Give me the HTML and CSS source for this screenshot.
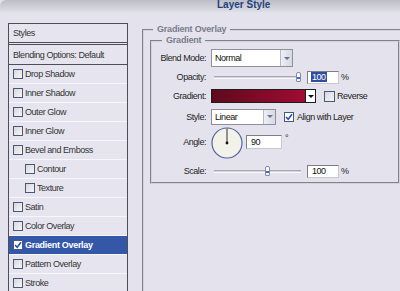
FILE: index.html
```html
<!DOCTYPE html>
<html lang="en">
<head>
    <meta charset="UTF-8">
    <meta name="viewport" content="width=device-width, initial-scale=1.0">
    <title>Layer Style</title>
    <link rel="stylesheet" href="styles.css">
</head>
<body>
    <div class="titlebar"><span class="title">Layer Style</span></div>

    <div class="dialog">
        <ul class="style-list">
            <li class="head styles">Styles</li>
            <li class="head">Blending Options: Default</li>
            <li><span class="box"></span>Drop Shadow</li>
            <li><span class="box"></span>Inner Shadow</li>
            <li><span class="box"></span>Outer Glow</li>
            <li><span class="box"></span>Inner Glow</li>
            <li><span class="box"></span>Bevel and Emboss</li>
            <li class="sub"><span class="box"></span>Contour</li>
            <li class="sub"><span class="box"></span>Texture</li>
            <li><span class="box"></span>Satin</li>
            <li><span class="box"></span>Color Overlay</li>
            <li class="selected"><span class="box checked"><svg width="8" height="8" viewBox="0 0 8 8"><path d="M1 4 L3.2 6.3 L7 1.2" fill="none" stroke="#2452b4" stroke-width="1.6"/></svg></span>Gradient Overlay</li>
            <li><span class="box"></span>Pattern Overlay</li>
            <li><span class="box"></span>Stroke</li>
        </ul>

        <div class="settings">
            <fieldset class="group">
                <legend>Gradient Overlay</legend>
                <fieldset class="group inner">
                    <legend>Gradient</legend>

                    <div class="row row-blend">
                        <span class="label">Blend Mode:</span>
                        <div class="select blend-select"><span class="select-value">Normal</span><span class="select-btn"></span></div>
                    </div>

                    <div class="row row-opacity">
                        <span class="label">Opacity:</span>
                        <div class="slider"><span class="thumb" style="left: 82px"></span></div>
                        <span class="field"><span class="highlight">100</span></span>
                        <span class="unit">%</span>
                    </div>

                    <div class="row row-gradient">
                        <span class="label">Gradient:</span>
                        <span class="swatch"></span><span class="swatch-btn"></span>
                        <span class="box reverse-box"></span><span class="check-label">Reverse</span>
                    </div>

                    <div class="row row-style">
                        <span class="label">Style:</span>
                        <div class="select style-select"><span class="select-value">Linear</span><span class="select-btn"></span></div>
                        <span class="box align-box checked"><svg width="8" height="8" viewBox="0 0 8 8"><path d="M1 4 L3.2 6.3 L7 1.2" fill="none" stroke="#2452b4" stroke-width="1.6"/></svg></span><span class="check-label">Align with Layer</span>
                    </div>

                    <div class="row row-angle">
                        <span class="label">Angle:</span>
                        <svg class="dial" width="32" height="32" viewBox="0 0 32 32">
                            <circle cx="16" cy="16" r="15" fill="#f2f1ea" stroke="#53639b" stroke-width="1.2"/>
                            <line x1="16" y1="16" x2="16" y2="1.5" stroke="#333" stroke-width="1"/>
                            <circle cx="16" cy="16" r="1.4" fill="#111"/>
                        </svg>
                        <span class="field angle-field">90</span>
                        <span class="degree">°</span>
                    </div>

                    <div class="row row-scale">
                        <span class="label">Scale:</span>
                        <div class="slider"><span class="thumb" style="left: 51px"></span></div>
                        <span class="field">100</span>
                        <span class="unit">%</span>
                    </div>
                </fieldset>
            </fieldset>
        </div>
    </div>
</body>
</html>
```

FILE: styles.css
```css
body {
    margin: 0;
    width: 400px;
    height: 291px;
    overflow: hidden;
    background-color: #e4e3ed;
    font-family: 'Liberation Sans', Arial, sans-serif;
    font-size: 9px;
    letter-spacing: -0.45px;
    color: #1e1e1e;
}

.titlebar {
    height: 13px;
    background: linear-gradient(to bottom, #bdbdc7 0, #d3d3dc 65%, #e4e3ed 100%);
    border-top-left-radius: 6px;
    overflow: hidden;
}

.title {
    display: block;
    padding-left: 217px;
    font-size: 10px;
    font-weight: bold;
    letter-spacing: 0;
    line-height: 10px;
    color: #23417f;
}

.dialog {
    display: flex;
    align-items: flex-start;
}

/* left column: list of effects */
.style-list {
    flex: none;
    list-style: none;
    margin: 10px 0 0 8px;
    padding: 0;
    width: 120px;
    box-sizing: border-box;
    border: 1px solid #4e4e56;
    border-bottom: none;
    background-color: #e6e5ef;
    color: #333;
}

.style-list li {
    display: flex;
    align-items: center;
    height: 18px;
    padding-left: 4px;
    border-bottom: 1px solid #f7f7fb;
    white-space: nowrap;
}

.style-list li.head {
    height: 19px;
    border-bottom: 1px solid #4e4e56;
}

.style-list li.styles {
    height: 18px;
    border-bottom: 3px double #4e4e56;
}

.style-list li.sub {
    padding-left: 16px;
}

.style-list li.selected {
    background-color: #3557a8;
    color: #fff;
    font-weight: bold;
    letter-spacing: -0.3px;
}

.box {
    display: inline-flex;
    align-items: center;
    justify-content: center;
    width: 10px;
    height: 10px;
    box-sizing: border-box;
    margin-right: 2px;
    border: 1px solid #4c5774;
    background: linear-gradient(135deg, #d6d6de, #f6f6f8);
    flex: none;
}

.box.checked {
    background: #fff;
}

/* right column: effect settings */
.settings {
    flex: none;
    height: 267px;
    overflow: hidden;
    margin: 11px 0 0 14px;
}

.group {
    margin: 0;
    padding: 0 0 0 6px;
    border: 2px groove #d2d2dc;
    border-right: none;
    border-bottom: none;
    width: 250px;
    height: 300px;
}

.group legend {
    margin-left: 3px;
    padding: 0 4px;
    font-weight: bold;
    letter-spacing: -0.2px;
    line-height: 11px;
    color: #7b7b8c;
}

.group.inner {
    width: 246px;
    height: auto;
    padding: 2px 0 1px 0;
    border: 2px groove #d2d2dc;
}

.group.inner legend {
    margin-left: 10px;
}

.row {
    display: flex;
    align-items: center;
    height: 20px;
}

.row-opacity {
    height: 18px;
}

.row-style {
    height: 21px;
}

.row-angle {
    height: 30px;
}

.row-scale {
    margin-top: 4px;
}

.label {
    width: 54px;
    margin-right: 5px;
    text-align: right;
    white-space: nowrap;
    flex: none;
}

.select {
    display: flex;
    height: 18px;
    box-sizing: border-box;
    border: 1px solid #8e8e9c;
    background-color: #fff;
}

.blend-select {
    width: 82px;
}

.style-select {
    width: 65px;
    height: 16px;
}

.select-value {
    flex: 1;
    padding-left: 3px;
    display: flex;
    align-items: center;
    color: #111;
}

.select-btn {
    width: 11px;
    border-left: 1px solid #b8b8c6;
    background: linear-gradient(to right, #eeeef4, #d8d8e4);
    display: flex;
    align-items: center;
    justify-content: center;
}

.select-btn::after {
    content: '';
    border-left: 3px solid transparent;
    border-right: 3px solid transparent;
    border-top: 3px solid #6b6f9a;
}

.slider {
    position: relative;
    width: 87px;
    height: 3px;
    box-sizing: border-box;
    margin-left: 3px;
    margin-right: 6px;
    border-top: 1px solid #a8a8b6;
    border-bottom: 1px solid #fbfbfd;
    background-color: #d2d2dc;
}

.thumb {
    position: absolute;
    top: -5px;
    width: 5px;
    height: 10px;
    box-sizing: border-box;
    border: 1px solid #8a8a9c;
    border-radius: 2px 2px 1px 1px;
    background: linear-gradient(to bottom, #fff 0, #fff 45%, #3a6ad4 45%, #3a6ad4 70%, #f4f4f8 70%);
}

.field {
    display: flex;
    align-items: center;
    width: 32px;
    height: 13px;
    box-sizing: border-box;
    padding-left: 4px;
    border: 1px solid #7e7e86;
    border-right-color: #c8c8d0;
    border-bottom-color: #c8c8d0;
    background-color: #fff;
    color: #111;
}

.highlight {
    background-color: #2f4f9e;
    color: #fff;
    padding: 0 1px;
    margin-left: -1px;
}

.unit {
    margin-left: 2px;
}

.swatch {
    width: 95px;
    height: 14px;
    box-sizing: border-box;
    border: 1px solid #1d1d1d;
    background: linear-gradient(to right, #5e0a1e, #a10b33);
}

.swatch-btn {
    display: flex;
    align-items: center;
    justify-content: center;
    width: 10px;
    height: 14px;
    box-sizing: border-box;
    border: 1px solid #1d1d1d;
    border-left: none;
    background-color: #fff;
}

.swatch-btn::after {
    content: '';
    border-left: 3px solid transparent;
    border-right: 3px solid transparent;
    border-top: 3px solid #111;
}

.reverse-box {
    width: 11px;
    height: 11px;
    margin-left: 8px;
}

.align-box {
    margin-left: 8px;
    margin-right: 3px;
}

.check-label {
    color: #222;
}

.dial {
    margin-top: 1px;
}

.angle-field {
    width: 36px;
    height: 14px;
    margin-left: 3px;
}

.degree {
    align-self: flex-start;
    margin: 6px 0 0 3px;
}
```
